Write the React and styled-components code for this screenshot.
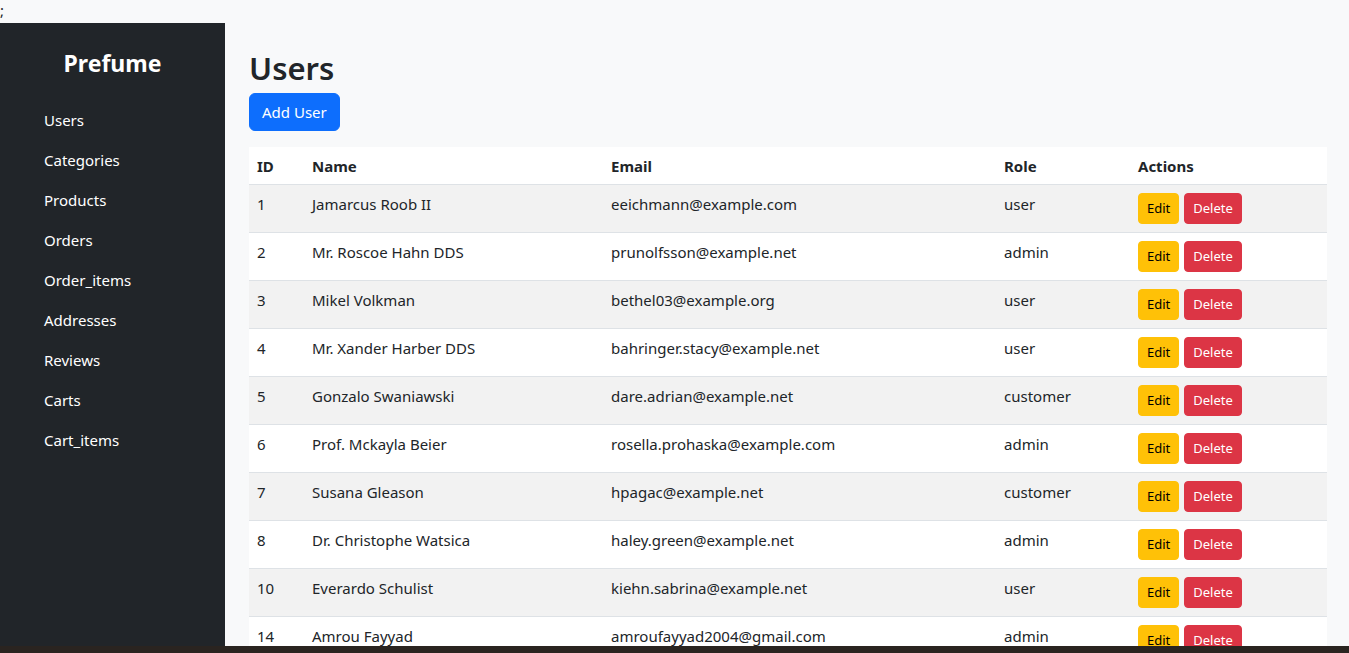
import { createGlobalStyle } from "styled-components";
import styled from "styled-components";

const users = [
  { id: 1, name: "Jamarcus Roob II", email: "eeichmann@example.com", role: "user" },
  { id: 2, name: "Mr. Roscoe Hahn DDS", email: "prunolfsson@example.net", role: "admin" },
  { id: 3, name: "Mikel Volkman", email: "bethel03@example.org", role: "user" },
  { id: 4, name: "Mr. Xander Harber DDS", email: "bahringer.stacy@example.net", role: "user" },
  { id: 5, name: "Gonzalo Swaniawski", email: "dare.adrian@example.net", role: "customer" },
  { id: 6, name: "Prof. Mckayla Beier", email: "rosella.prohaska@example.com", role: "admin" },
  { id: 7, name: "Susana Gleason", email: "hpagac@example.net", role: "customer" },
  { id: 8, name: "Dr. Christophe Watsica", email: "haley.green@example.net", role: "admin" },
  { id: 10, name: "Everardo Schulist", email: "kiehn.sabrina@example.net", role: "user" },
  { id: 14, name: "Amrou Fayyad", email: "amroufayyad2004@gmail.com", role: "admin" },
];

const links = ["Users", "Categories", "Products", "Orders", "Order_items", "Addresses", "Reviews", "Carts", "Cart_items"];

function App() {
  return (
    <>
      <GlobalStyle />
      <SStray>;</SStray>
      <SLayout>
        <SSidebar>
          <SBrand>Prefume</SBrand>
          <SNav>
            {links.map((link) => (
              <SNavLink key={link}>{link}</SNavLink>
            ))}
          </SNav>
        </SSidebar>
        <SMain>
          <STitle>Users</STitle>
          <SButton $variant="primary">Add User</SButton>
          <STable>
            <thead>
              <tr>
                <STh $w={55}>ID</STh>
                <STh $w={299}>Name</STh>
                <STh $w={393}>Email</STh>
                <STh $w={134}>Role</STh>
                <STh>Actions</STh>
              </tr>
            </thead>
            <tbody>
              {users.map((user, index) => (
                <STr key={user.id} $striped={index % 2 === 0}>
                  <STd>{user.id}</STd>
                  <STd>{user.name}</STd>
                  <STd>{user.email}</STd>
                  <STd>{user.role}</STd>
                  <STd>
                    <SActions>
                      <SButton $variant="warning" $small>Edit</SButton>
                      <SButton $variant="danger" $small>Delete</SButton>
                    </SActions>
                  </STd>
                </STr>
              ))}
            </tbody>
          </STable>
        </SMain>
      </SLayout>
      <STaskbar />
    </>
  );
}

export default App;

const GlobalStyle = createGlobalStyle`
  * { box-sizing: border-box; }
  body {
    margin: 0;
    background: #f8f9fa;
    color: #212529;
    font-family: "Noto Sans", "Open Sans", sans-serif;
    font-size: 16px;
    line-height: 1.5;
  }
`;

const SStray = styled.div`
  height: 23px;
  line-height: 20px;
  font-size: 15px;
`;

const SLayout = styled.div`
  display: flex;
  min-height: 100vh;
`;

const SSidebar = styled.aside`
  width: 225px;
  flex-shrink: 0;
  background: #212529;
  color: #fff;
  padding: 24px 16px;
`;

const SBrand = styled.h4`
  margin: 0 0 24px;
  font-size: 23px;
  font-weight: 700;
  line-height: 32px;
  text-align: center;
`;

const SNav = styled.nav`
  display: flex;
  flex-direction: column;
`;

const SNavLink = styled.a`
  display: block;
  padding: 5px 12px 11px 28px;
  height: 40px;
  font-size: 15px;
  line-height: 24px;
  color: #fff;
  cursor: pointer;
`;

const SMain = styled.main`
  flex: 1;
  padding: 24px 22px 24px 24px;
`;

const STitle = styled.h1`
  margin: 2px 0 6px;
  font-size: 31px;
  font-weight: 600;
  line-height: 38px;
`;

const colors = {
  primary: { bg: "#0d6efd", fg: "#fff" },
  warning: { bg: "#ffc107", fg: "#000" },
  danger: { bg: "#dc3545", fg: "#fff" },
};

const SButton = styled.button`
  font-family: inherit;
  border: 1px solid ${(p) => colors[p.$variant].bg};
  background: ${(p) => colors[p.$variant].bg};
  color: ${(p) => colors[p.$variant].fg};
  font-size: ${(p) => (p.$small ? "13px" : "15px")};
  line-height: ${(p) => (p.$small ? "21px" : "24px")};
  padding: ${(p) => (p.$small ? "4px 8px" : "6px 12px")};
  border-radius: ${(p) => (p.$small ? "4px" : "6px")};
  cursor: pointer;
`;

const STable = styled.table`
  margin-top: 16px;
  width: 100%;
  border-collapse: collapse;
  background: #fff;
  font-size: 15px;
`;

const STh = styled.th`
  width: ${(p) => (p.$w ? `${p.$w}px` : "auto")};
  text-align: left;
  font-weight: 700;
  padding: 7px 8px 6px;
  border-bottom: 1px solid #dee2e6;
  line-height: 24px;
`;

const STr = styled.tr`
  background: ${(p) => (p.$striped ? "#f2f2f2" : "#fff")};
`;

const STd = styled.td`
  padding: 8px;
  height: 48px;
  vertical-align: top;
  border-bottom: 1px solid #dee2e6;
  line-height: 22px;
`;

const SActions = styled.div`
  display: flex;
  gap: 5px;
`;

const STaskbar = styled.div`
  position: fixed;
  left: 0;
  right: 0;
  bottom: 0;
  height: 7px;
  background: #2a2420;
`;
